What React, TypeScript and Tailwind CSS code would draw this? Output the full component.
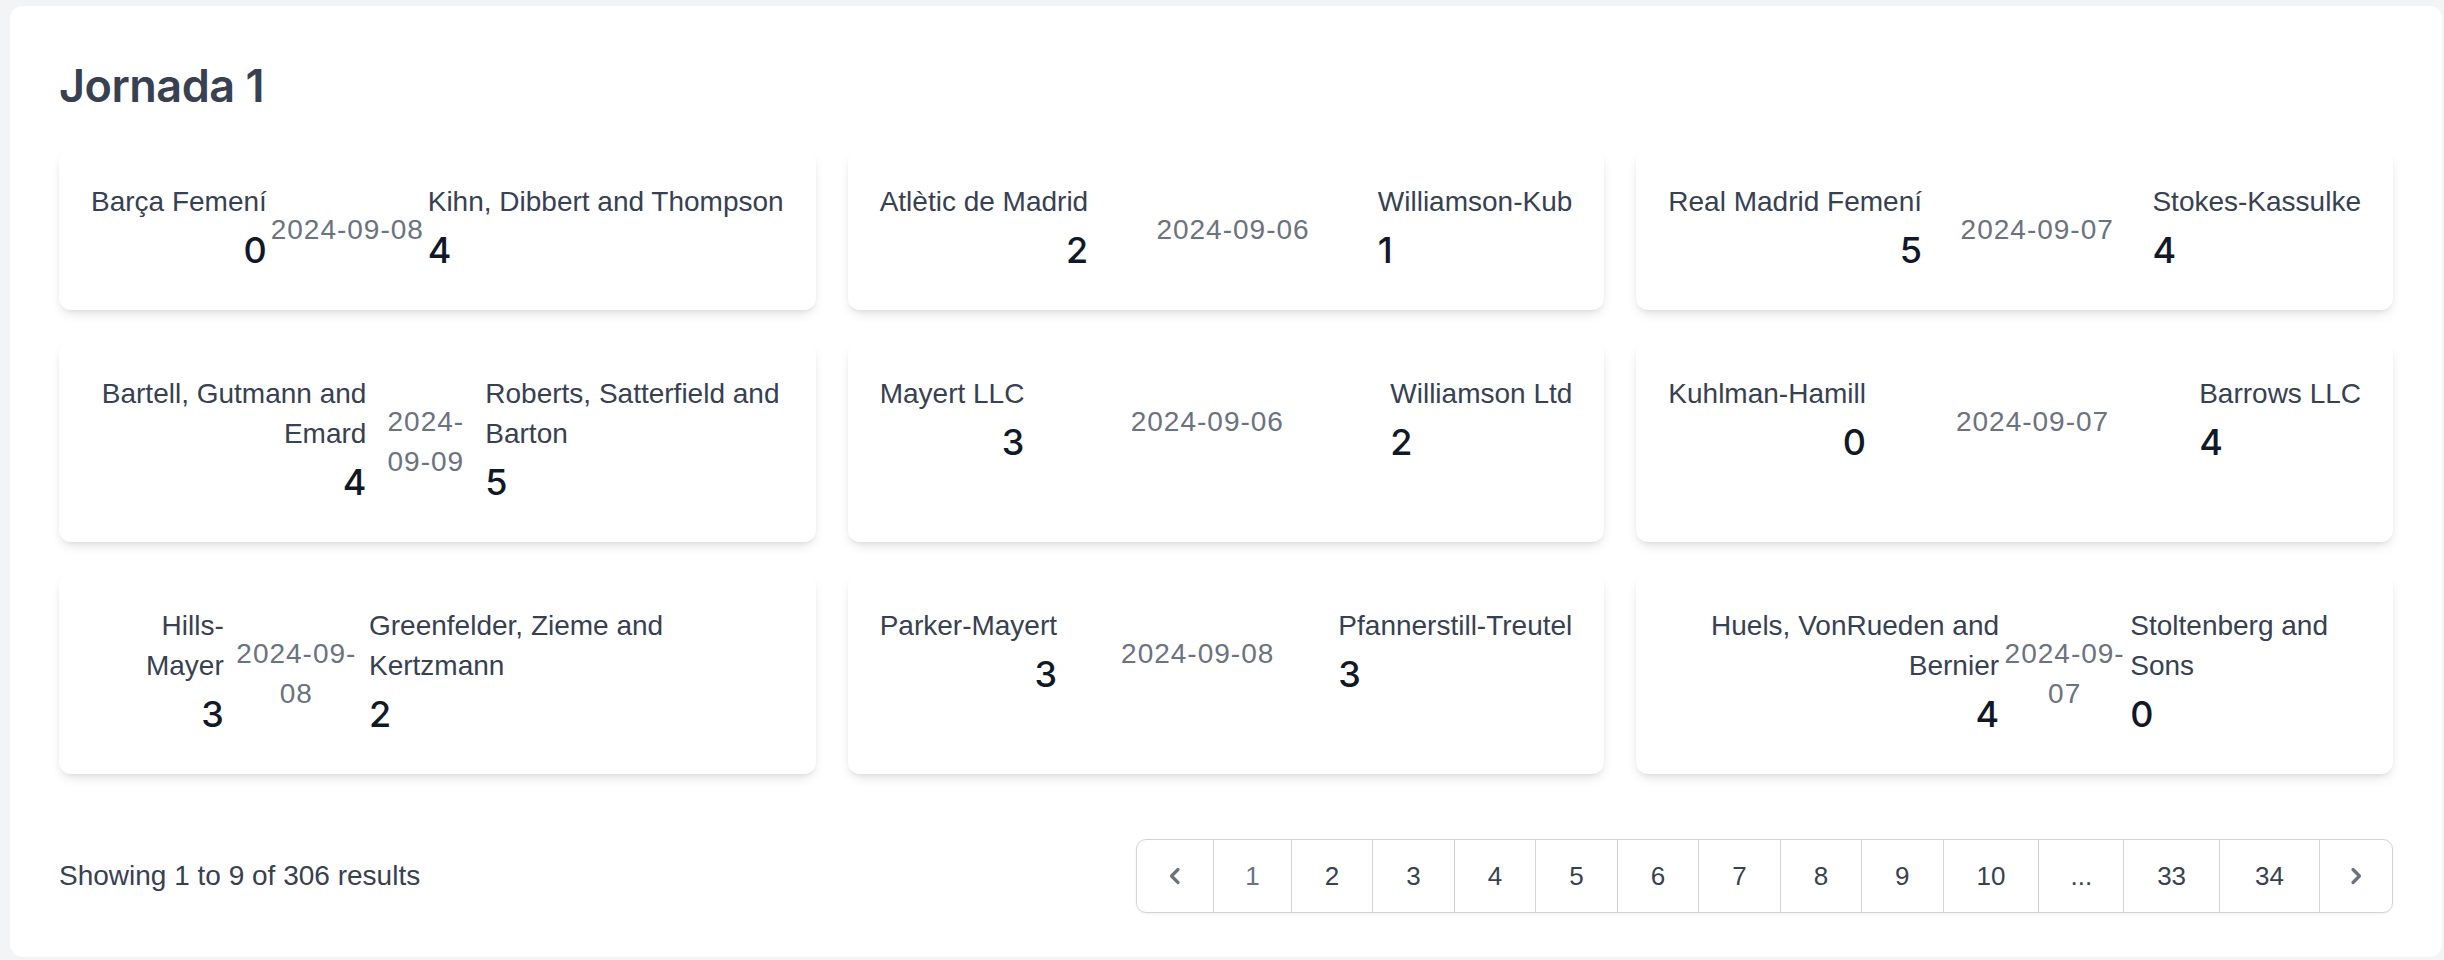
type Match = {
  home: string;
  away: string;
  homeScore: number;
  awayScore: number;
  date: string;
};

const matches: Match[] = [
  { home: "Barça Femení", away: "Kihn, Dibbert and Thompson", homeScore: 0, awayScore: 4, date: "2024-09-08" },
  { home: "Atlètic de Madrid", away: "Williamson-Kub", homeScore: 2, awayScore: 1, date: "2024-09-06" },
  { home: "Real Madrid Femení", away: "Stokes-Kassulke", homeScore: 5, awayScore: 4, date: "2024-09-07" },
  { home: "Bartell, Gutmann and Emard", away: "Roberts, Satterfield and Barton", homeScore: 4, awayScore: 5, date: "2024-09-09" },
  { home: "Mayert LLC", away: "Williamson Ltd", homeScore: 3, awayScore: 2, date: "2024-09-06" },
  { home: "Kuhlman-Hamill", away: "Barrows LLC", homeScore: 0, awayScore: 4, date: "2024-09-07" },
  { home: "Hills-Mayer", away: "Greenfelder, Zieme and Kertzmann", homeScore: 3, awayScore: 2, date: "2024-09-08" },
  { home: "Parker-Mayert", away: "Pfannerstill-Treutel", homeScore: 3, awayScore: 3, date: "2024-09-08" },
  { home: "Huels, VonRueden and Bernier", away: "Stoltenberg and Sons", homeScore: 4, awayScore: 0, date: "2024-09-07" },
];

const pages = ["1", "2", "3", "4", "5", "6", "7", "8", "9", "10", "...", "33", "34"];

function MatchCard({ match }: { match: Match }) {
  return (
    <div className="rounded-[12px] bg-white px-[32px] py-[32px] shadow-[0_6px_12px_-2px_rgba(0,0,0,0.1),0_3px_6px_-3px_rgba(0,0,0,0.1)]">
      <div className="flex items-center justify-between">
        <div className="text-right">
          <p className="text-[28px] leading-[40px] text-[#374151]">{match.home}</p>
          <p className="font-['Inter','Liberation_Sans',sans-serif] text-[36px] font-medium leading-[56px] text-[#111827]">
            {match.homeScore}
          </p>
        </div>
        <div className="text-center text-[28px] leading-[40px] tracking-[1px] text-[#6b7280]">{match.date}</div>
        <div className="text-left">
          <p className="text-[28px] leading-[40px] text-[#374151]">{match.away}</p>
          <p className="font-['Inter','Liberation_Sans',sans-serif] text-[36px] font-medium leading-[56px] text-[#111827]">
            {match.awayScore}
          </p>
        </div>
      </div>
    </div>
  );
}

function Chevron({ dir }: { dir: "left" | "right" }) {
  return (
    <svg width="24" height="24" viewBox="0 0 24 24" fill="none" stroke="currentColor" strokeWidth="3.2" strokeLinecap="round" strokeLinejoin="round">
      {dir === "left" ? <polyline points="15,5.5 8.5,12 15,18.5" /> : <polyline points="9,5.5 15.5,12 9,18.5" />}
    </svg>
  );
}

function pageClass(p: string) {
  if (p === "...") return "flex h-[72px] items-center border-l border-[#d1d5db] px-[31px] text-[26px] font-medium text-[#374151]";
  if (p === "1") return "flex h-[72px] items-center border-l border-[#d1d5db] px-[31px] text-[26px] font-medium text-[#6b7280]";
  if (p === "34") return "flex h-[72px] items-center border-l border-[#d1d5db] px-[35px] text-[26px] font-medium text-[#374151]";
  return "flex h-[72px] items-center border-l border-[#d1d5db] px-[33px] text-[26px] font-medium text-[#374151]";
}

export default function App() {
  return (
    <div className="min-h-screen bg-[#f3f4f6] pl-[10px] pr-[2px] pt-[6px] font-['Liberation_Sans',Arial,sans-serif]">
      <div className="rounded-[13px] bg-white px-[49px] pb-[44px] pt-[52px]">
        <h1 className="mb-[36px] font-['Inter','Liberation_Sans',sans-serif] text-[45px] font-semibold leading-[56px] tracking-[-0.5px] text-[#374151]">
          Jornada 1
        </h1>

        {/* match cards */}
        <div className="grid grid-cols-3 gap-[32px]">
          {matches.map((m, i) => (
            <MatchCard key={i} match={m} />
          ))}
        </div>

        {/* pagination */}
        <div className="mt-[65px] flex items-center justify-between">
          <p className="text-[28px] leading-[40px] text-[#374151]">
            Showing <span className="font-medium">1</span> to <span className="font-medium">9</span> of{" "}
            <span className="font-medium">306</span> results
          </p>
          <nav className="flex rounded-[10px] border border-[#d1d5db] shadow-[0_1px_3px_rgba(0,0,0,0.06)]">
            <span className="flex h-[72px] items-center px-[26px] text-[#6b7280]">
              <Chevron dir="left" />
            </span>
            {pages.map((p) => (
              <span key={p} className={pageClass(p)}>
                {p}
              </span>
            ))}
            <span className="flex h-[72px] items-center border-l border-[#d1d5db] px-[24px] text-[#6b7280]">
              <Chevron dir="right" />
            </span>
          </nav>
        </div>
      </div>
    </div>
  );
}
